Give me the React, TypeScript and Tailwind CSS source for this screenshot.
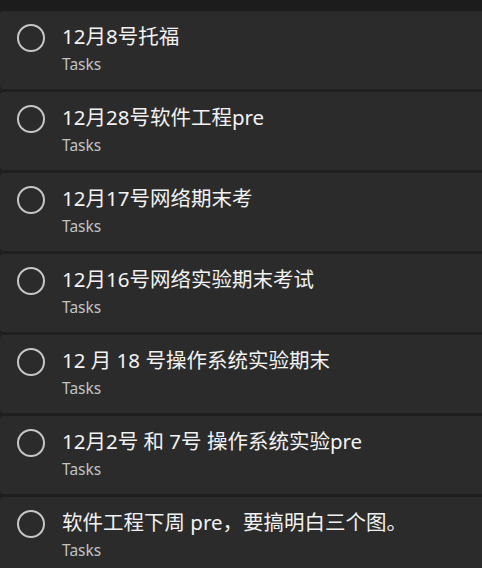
// Task list — dark cards with a round checkbox, title and list name
const TASKS = [
  "12月8号托福",
  "12月28号软件工程pre",
  "12月17号网络期末考",
  "12月16号网络实验期末考试",
  "12 月 18 号操作系统实验期末",
  "12月2号 和 7号 操作系统实验pre",
  "软件工程下周 pre，要搞明白三个图。",
];

function TaskRow({ title }: { title: string }) {
  return (
    <div className="flex h-[78px] shrink-0 items-start rounded-l-[4px] bg-[#2b2b2b]">
      <div className="ml-[17px] mt-[13px] h-[28px] w-[28px] shrink-0 rounded-full border-[2.5px] border-[#c6c6c6]" />
      <div className="ml-[17px] pt-[12px]">
        <div className="text-[20.5px] leading-[26px] text-[#f2f2f2] whitespace-nowrap">{title}</div>
        <div className="mt-[5px] text-[15.5px] leading-[20px] text-[#c2c2c2]">Tasks</div>
      </div>
    </div>
  );
}

export default function App() {
  return (
    <div
      className="h-[568px] w-[482px] overflow-hidden bg-[#1f1f1f]"
      style={{ fontFamily: "'Noto Sans', 'Noto Sans CJK SC', sans-serif" }}
    >
      <div className="h-[11px] bg-[#1c1c1c]" />
      <div className="flex flex-col gap-[3px]">
        {TASKS.map((t) => (
          <TaskRow key={t} title={t} />
        ))}
      </div>
    </div>
  );
}
